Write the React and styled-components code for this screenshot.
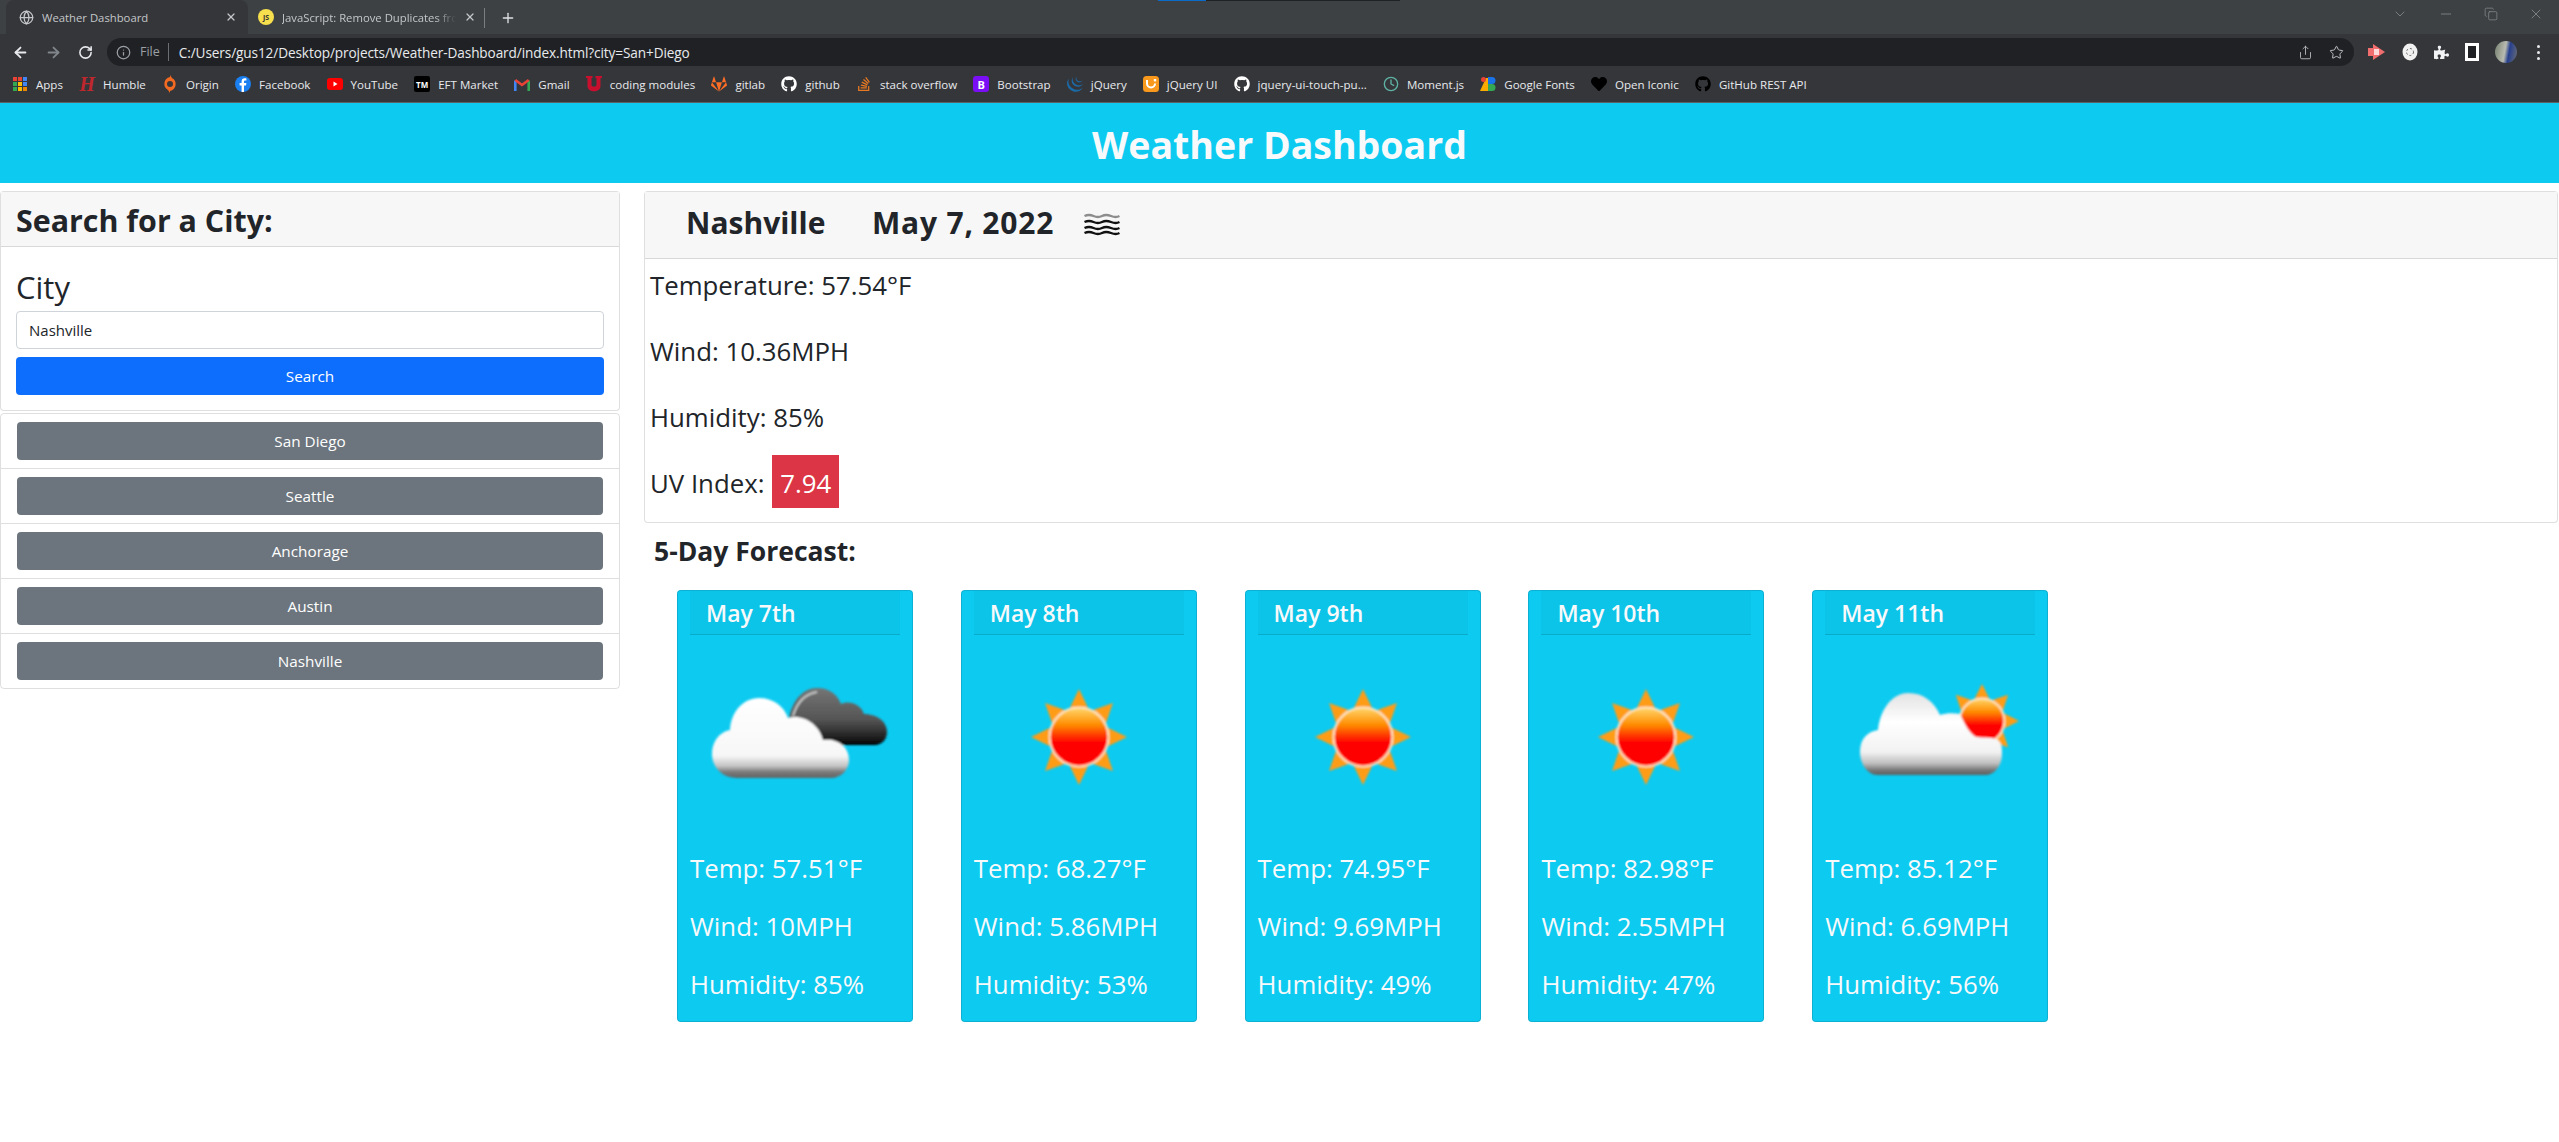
import React from 'react';
import styled, { createGlobalStyle } from 'styled-components';
import {
  ArrowLeft,
  ArrowRight,
  RotateCw,
  Info,
  Star,
  Share,
  X,
  Plus,
  Globe,
  ChevronDown,
  Minus,
  Copy,
  Clock
} from 'lucide-react';
import {
  FaGithub,
  FaGitlab,
  FaStackOverflow,
  FaHeart,
  FaPuzzlePiece
} from 'react-icons/fa';
import { SiJquery } from 'react-icons/si';

const FONT = '"Open Sans", "Noto Sans", sans-serif';

const GlobalStyle = createGlobalStyle`
  html, body {
    margin: 0;
    padding: 0;
    background: #fff;
  }
  body {
    font-family: ${FONT};
    color: #212529;
  }
  * {
    box-sizing: border-box;
  }
`;

const Page = styled.div`
  position: relative;
  width: 2559px;
  height: 1142px;
  overflow: hidden;
`;

/* browser frame */
const TabStrip = styled.div`
  display: flex;
  align-items: flex-end;
  height: 34px;
  padding-left: 6px;
  background: #3e4144;
  color: #c4c7c9;
  font-size: 11.3px;
`;

const LoadBar = styled.div`
  position: absolute;
  top: 0;
  left: 1158px;
  width: 242px;
  height: 1px;
  background: linear-gradient(90deg, #0b6bc9 20%, #202124 20%);
`;

const Tab = styled.div`
  display: flex;
  align-items: center;
  flex: none;
  width: ${(p) => p.$width}px;
  height: ${(p) => (p.$active ? 34 : 30)}px;
  padding: ${(p) => (p.$active ? '0 11px 0 13px' : '0 8px 4px 10px')};
  gap: 8px;
  background: ${(p) => (p.$active ? '#35363a' : 'transparent')};
  border-radius: 8px 8px 0 0;
  svg {
    flex: none;
  }
`;

const TabTitle = styled.span`
  flex: 1;
  overflow: hidden;
  white-space: nowrap;
  mask-image: ${(p) => (p.$fade ? 'linear-gradient(90deg, #000 88%, transparent 100%)' : 'none')};
`;

const JsFavicon = styled.span`
  display: flex;
  align-items: center;
  justify-content: center;
  flex: none;
  width: 16px;
  height: 16px;
  border-radius: 50%;
  background: #f7df4e;
  color: #333;
  font-size: 7px;
  font-weight: 700;
`;

const TabDivider = styled.span`
  flex: none;
  width: 1px;
  height: 20px;
  margin: 0 15px 6px 0;
  background: #7b7e81;
`;

const NewTab = styled.span`
  display: flex;
  margin-bottom: 8px;
  color: #dfe1e5;
`;

const WindowControls = styled.div`
  display: flex;
  align-items: center;
  gap: 30px;
  margin-left: auto;
  padding: 0 15px 12px 0;
  color: #9a9da0;
  align-self: flex-end;
`;

const Toolbar = styled.div`
  display: flex;
  align-items: center;
  height: 32px;
  padding: 4px 0 0 12px;
  background: #35363a;
  color: #e8eaed;
`;

const NavButtons = styled.div`
  display: flex;
  align-items: center;
  gap: 16px;
  width: 95px;
  flex: none;
`;

const Omnibox = styled.div`
  display: flex;
  align-items: center;
  flex: none;
  width: 2247px;
  height: 28px;
  padding: 0 10px 0 9px;
  border-radius: 14px;
  background: #202124;
  color: #9aa0a6;
  font-size: 12.5px;
`;

const Scheme = styled.span`
  margin-left: 9px;
  padding-right: 8px;
  border-right: 1px solid #6b6e72;
  line-height: 18px;
`;

const Url = styled.span`
  flex: 1;
  margin-left: 10px;
  color: #e8eaed;
  font-size: 13.6px;
  letter-spacing: -0.1px;
`;

const OmniActions = styled.div`
  display: flex;
  gap: 16px;
  color: #c8cacd;
`;

const Extensions = styled.div`
  display: flex;
  align-items: center;
  gap: 16px;
  margin-left: 14px;
`;

const Avatar = styled.span`
  width: 22px;
  height: 22px;
  border-radius: 50%;
  background: linear-gradient(100deg, #75806f 0%, #b9bbb0 45%, #27408e 62%, #6a6d74 100%);
`;

const Kebab = styled.span`
  display: flex;
  flex-direction: column;
  gap: 3px;
  margin-left: 4px;
  i {
    width: 3px;
    height: 3px;
    border-radius: 50%;
    background: #e8eaed;
  }
`;

const SidePanelIcon = styled.span`
  width: 14px;
  height: 18px;
  border: 3px solid #fff;
  background: #202124;
`;

const BookmarksBar = styled.div`
  display: flex;
  align-items: center;
  height: 37px;
  padding-left: 12px;
  gap: 16.15px;
  background: #35363a;
  border-bottom: 1px solid #5f6063;
  color: #e8eaed;
  font-size: 11.55px;
`;

const Bookmark = styled.span`
  display: flex;
  align-items: center;
  flex: none;
  gap: 8px;
  white-space: nowrap;
  svg {
    display: block;
    flex: none;
  }
`;

const BookmarkBadge = styled.span`
  display: flex;
  align-items: center;
  justify-content: center;
  flex: none;
  width: 16px;
  height: 16px;
  border-radius: ${(p) => p.$radius || 2}px;
  background: ${(p) => p.$bg};
  color: #fff;
  font-size: ${(p) => p.$size || 8}px;
  font-weight: 700;
`;

const HumbleMark = styled.span`
  display: block;
  flex: none;
  width: 16px;
  color: #c0272d;
  font-family: "Liberation Serif", serif;
  font-style: italic;
  font-weight: 700;
  font-size: 20px;
  line-height: 16px;
  text-align: center;
`;

/* page */
const Banner = styled.header`
  display: flex;
  align-items: center;
  justify-content: center;
  height: 80px;
  background: #0dcaf0;
`;

const BannerTitle = styled.h1`
  margin: 0;
  padding-top: 2px;
  color: #f8f9fa;
  font-size: 37.5px;
  font-weight: 700;
  line-height: 1.2;
`;

const Columns = styled.main`
  display: grid;
  grid-template-columns: 620px 1fr;
  column-gap: 24px;
  padding: 8px 1px 0 0;
  align-items: start;
`;

const Sidebar = styled.aside`
  display: flex;
  flex-direction: column;
  gap: 2px;
`;

const Card = styled.section`
  border: 1px solid rgba(0, 0, 0, 0.125);
  border-radius: 4px;
  background: #fff;
`;

const CardHeader = styled.div`
  display: flex;
  align-items: flex-start;
  height: ${(p) => p.$height}px;
  padding: ${(p) => p.$top}px 15px 0;
  background: #f7f7f7;
  border-bottom: 1px solid rgba(0, 0, 0, 0.125);
`;

const CardTitle = styled.h3`
  margin: 0;
  font-size: 30.4px;
  font-weight: 700;
  line-height: 37px;
  white-space: nowrap;
`;

const CityName = styled(CardTitle)`
  margin-left: 26px;
  width: 186px;
  font-size: 30px;
`;

const CityDate = styled(CardTitle)`
  width: 212px;
  font-size: 30px;
  letter-spacing: 0.8px;
`;

const WaveIcon = styled.svg`
  flex: none;
  margin-top: 8px;
`;

const SearchForm = styled.form`
  display: flex;
  flex-direction: column;
  padding: 16px 15px 15px;
`;

const FieldLabel = styled.label`
  height: 40px;
  margin-bottom: 8px;
  font-size: 31px;
  line-height: 48px;
`;

const CityInput = styled.div`
  display: flex;
  align-items: center;
  height: 38px;
  padding: 0 12px;
  border: 1px solid #ced4da;
  border-radius: 4px;
  font-size: 15px;
  margin-bottom: 8px;
`;

const Button = styled.div`
  display: flex;
  align-items: center;
  justify-content: center;
  height: 38px;
  border-radius: 4px;
  background: ${(p) => p.$bg};
  color: #fff;
  font-size: 15.3px;
`;

const HistoryList = styled.ul`
  display: flex;
  flex-direction: column;
  margin: 0;
  padding: 0;
  list-style: none;
  border: 1px solid rgba(0, 0, 0, 0.125);
  border-radius: 4px;
`;

const HistoryItem = styled.li`
  padding: 8px 16px;
  & + & {
    border-top: 1px solid rgba(0, 0, 0, 0.125);
  }
`;

const Detail = styled.div`
  padding: 8px 5px 0;
`;

const Stat = styled.p`
  margin: 0 0 30px;
  font-size: 25.8px;
  line-height: 36px;
  white-space: nowrap;
  &:last-child {
    margin: -10px 0 0;
    height: 67px;
    line-height: 57px;
  }
`;

const UvBadge = styled.span`
  display: inline-block;
  height: 53px;
  margin-left: 1px;
  padding: 0 8px;
  background: #dc3545;
  color: #fff;
  line-height: 57px;
`;

const ForecastTitle = styled.h4`
  margin: 10px 0 21px 10px;
  font-size: 26.5px;
  font-weight: 700;
  line-height: 36px;
`;

const ForecastRow = styled.div`
  display: flex;
  gap: 47.8px;
  padding-left: 33px;
`;

const DayCard = styled.article`
  display: flex;
  flex-direction: column;
  flex: none;
  width: 236px;
  height: 432px;
  border: 1px solid rgba(0, 0, 0, 0.125);
  border-radius: 4px;
  background: #0dcaf0;
  color: #f8f9fa;
`;

const DayHeader = styled.div`
  height: 44px;
  margin: 0 12px;
  padding: 0 16px;
  background: rgba(0, 0, 0, 0.03);
  border-bottom: 1px solid rgba(0, 0, 0, 0.125);
  font-size: 23px;
  font-weight: 600;
  line-height: 44px;
  white-space: nowrap;
`;

const DayIcon = styled.div`
  display: flex;
  justify-content: center;
  height: 204px;
  margin-top: 3px;
  margin-bottom: 12px;
`;

const DayStat = styled.p`
  margin: 0 0 22px 12px;
  font-size: 25.8px;
  line-height: 36px;
  white-space: nowrap;
`;

/* drawn icons */
const AppsIcon = () => {
  const colors = ['#e94335', '#e94335', '#4285f4', '#34a853', '#fbbc04', '#4285f4', '#34a853', '#fbbc04', '#ea8600'];
  return (
    <svg width="16" height="14" viewBox="-1 0 16 14">
      {colors.map((c, i) => (
        <rect key={i} x={(i % 3) * 5} y={Math.floor(i / 3) * 5} width="4" height="4" fill={c} />
      ))}
    </svg>
  );
};

const OriginIcon = () => (
  <svg width="16" height="18" viewBox="0 0 16 18">
    <path d="M8 0 L10 3 A7 7 0 0 1 8 16 L8 18 L6 15 A7 7 0 0 1 8 2 Z" fill="#f26a21" />
    <circle cx="8" cy="9" r="3" fill="#35363a" />
  </svg>
);

const FacebookIcon = () => (
  <svg width="16" height="16" viewBox="0 0 16 16">
    <circle cx="8" cy="8" r="8" fill="#1a7ff0" />
    <path d="M9 16V9.5h2l.4-2.4H9V5.8c0-.8.3-1.2 1.2-1.2h1.2V2.5C10.900 2.400 10.300 2.300 9.700 2.300 7.800 2.300 6.600 3.500 6.600 5.500v1.600H4.600v2.400h2V16z" fill="#fff" />
  </svg>
);

const YoutubeIcon = () => (
  <svg width="16" height="12" viewBox="0 0 16 12">
    <rect width="16" height="12" rx="3" fill="#f00" />
    <path d="M6.500 3.500 L10.500 6 L6.500 8.500 Z" fill="#fff" />
  </svg>
);

const GmailIcon = () => (
  <svg width="16" height="13" viewBox="0 0 16 13" fill="none" strokeWidth="2.600">
    <path d="M1.300 13V2.500" stroke="#4285f4" />
    <path d="M14.700 13V2.500" stroke="#34a853" />
    <path d="M1.300 2 L8 7 L14.700 2" stroke="#ea4335" />
  </svg>
);

const UtahIcon = () => (
  <svg width="16" height="16" viewBox="0 0 16 16">
    <path d="M0 0h6.500v2H5.500v7c0 2 5 2 5 0V2H9.500V0H16v2h-1.500v8c0 7-13 7-13 0V2H0z" fill="#c8102e" />
  </svg>
);

const JqueryUiIcon = () => (
  <svg width="16" height="16" viewBox="0 0 16 16">
    <rect width="16" height="16" rx="3.500" fill="#f8981d" />
    <path d="M4 4v3.500a4 4 0 0 0 8 0" fill="none" stroke="#fff" strokeWidth="2" />
    <rect x="10.800" y="3" width="2.400" height="2.400" fill="#fff" />
  </svg>
);

const GoogleFontsIcon = () => (
  <svg width="16" height="16" viewBox="0 0 16 16">
    <path d="M0 15 L6 2 H8 V15 Z" fill="#f9ab00" />
    <circle cx="3.500" cy="3.500" r="2.500" fill="#ea4335" />
    <rect x="8" y="1" width="4" height="7" fill="#1a73e8" />
    <circle cx="12" cy="4.500" r="3.500" fill="#1a73e8" />
    <circle cx="12" cy="11.500" r="3.500" fill="#34a853" />
    <rect x="8" y="8" width="4" height="7" fill="#34a853" />
  </svg>
);

const RecordIcon = () => (
  <svg width="18" height="18" viewBox="0 0 18 18">
    <path d="M0 5h5V1l12 8-12 8v-4H0z" fill="#f26d6d" />
    <rect x="6" y="6" width="5" height="6" fill="#ffd9d9" />
  </svg>
);

const BracketIcon = () => (
  <svg width="16" height="18" viewBox="0 0 16 18">
    <ellipse cx="8" cy="9" rx="7.500" ry="8.500" fill="#f1f1f1" />
    <circle cx="8" cy="9" r="3.500" fill="none" stroke="#666" strokeDasharray="2 2" />
  </svg>
);

const Waves = () => (
  <WaveIcon width="36" height="24" viewBox="0 0 36 24" fill="none" strokeWidth="2.400">
    {[3, 9, 15, 20].map((y, i) => (
      <path
        key={y}
        d={`M0.500 ${y + 1} Q5 ${y - 1} 9.500 ${y + 1} T18 ${y + 1} T27 ${y + 1} T35.500 ${y + 1}`}
        stroke={i === 0 ? '#8d8d8d' : '#111'}
      />
    ))}
  </WaveIcon>
);

const rayPoints = (cx, cy, outer, inner) => {
  const points = [];
  for (let i = 0; i < 16; i += 1) {
    const r = i % 2 === 0 ? outer : inner;
    const a = (i * Math.PI) / 8 - Math.PI / 2;
    points.push(`${cx + r * Math.cos(a)},${cy + r * Math.sin(a)}`);
  }
  return points.join(' ');
};

const Sun = ({ cx, cy, outer, inner, disc, id }) => (
  <g>
    <defs>
      <linearGradient id={id} x1="0" y1="0" x2="0" y2="1">
        <stop offset="0" stopColor="#ffd76a" />
        <stop offset="0.3" stopColor="#ff8a00" />
        <stop offset="0.6" stopColor="#ff0000" />
        <stop offset="1" stopColor="#ff0000" />
      </linearGradient>
    </defs>
    <polygon points={rayPoints(cx, cy, outer, inner)} fill="#ff9c12" />
    <circle cx={cx} cy={cy} r={disc + 0.7} fill={`url(#${id})`} stroke="#ffe7c4" strokeWidth="1" />
  </g>
);

const IconFrame = ({ children }) => (
  <svg width="200" height="200" viewBox="0 0 100 100">
    <defs>
      <filter id="soft" x="-10%" y="-10%" width="120%" height="120%">
        <feGaussianBlur stdDeviation="0.45" />
      </filter>
      <linearGradient id="whiteCloud" x1="0" y1="0" x2="0" y2="1">
        <stop offset="0" stopColor="#ffffff" />
        <stop offset="0.72" stopColor="#f7f7f7" />
        <stop offset="0.85" stopColor="#c4c4c4" />
        <stop offset="0.92" stopColor="#7d7d7d" />
        <stop offset="1" stopColor="#626262" />
      </linearGradient>
      <linearGradient id="palerCloud" x1="0" y1="0" x2="0" y2="1">
        <stop offset="0" stopColor="#e2e2e2" />
        <stop offset="0.35" stopColor="#ffffff" />
        <stop offset="0.72" stopColor="#f2f2f2" />
        <stop offset="0.86" stopColor="#bdbdbd" />
        <stop offset="0.94" stopColor="#787878" />
        <stop offset="1" stopColor="#5e5e5e" />
      </linearGradient>
      <linearGradient id="darkCloud" x1="0" y1="0" x2="0" y2="1">
        <stop offset="0" stopColor="#757575" />
        <stop offset="0.55" stopColor="#555" />
        <stop offset="0.85" stopColor="#222" />
        <stop offset="1" stopColor="#000" />
      </linearGradient>
    </defs>
    <g filter="url(#soft)">{children}</g>
  </svg>
);

const BrokenClouds = () => (
  <IconFrame>
    <path
      d="M47 40 C49 31 54 25 61 25 C67 25 71 28 73 33 C77 31 83 33 84.500 38 C90 38 96 41 96 47 C96 51 93 53.500 90 53.500 H58 Z"
      fill="url(#darkCloud)"
    />
    <path d="M49 39 C51 32 55 28 61 27" fill="none" stroke="#c8c8c8" strokeWidth="1" />
    <path
      d="M21 70 C13 70 8.500 64 8.500 58 C8.500 52 12 47 17.500 46 C18 37 24 30 32 30 C39 30 44.500 34 46.500 40 C54 38 62 43 64 51 C71 50 77 54 77 61 C77 66 73 70 68 70 Z"
      fill="url(#whiteCloud)"
    />
  </IconFrame>
);

const ClearSky = () => (
  <IconFrame>
    <Sun cx={50} cy={49.500} outer={24} inner={14} disc={14} id="sunClear" />
  </IconFrame>
);

const FewClouds = () => (
  <IconFrame>
    <Sun cx={76} cy={41.500} outer={18.500} inner={11} disc={10.500} id="sunFew" />
    <path
      d="M24 68.500 C18 68.500 15 62 15 57 C15 51 18 47 24 46 C25 36 31 27.500 39 27.500 C47 27.500 52 32 55 38.500 C58 37.500 62 37.500 65 38 C67 42 69 47 73 49.500 C77 50 82 49.500 84 51 C86 53 86 55 86 58 C86 64 82 68.500 78 68.500 Z"
      fill="url(#palerCloud)"
    />
  </IconFrame>
);

const BOOKMARKS = [
  ['Apps', <AppsIcon />],
  ['Humble', <HumbleMark>H</HumbleMark>],
  ['Origin', <OriginIcon />],
  ['Facebook', <FacebookIcon />],
  ['YouTube', <YoutubeIcon />],
  ['EFT Market', <BookmarkBadge $bg="#000">TM</BookmarkBadge>],
  ['Gmail', <GmailIcon />],
  ['coding modules', <UtahIcon />],
  ['gitlab', <FaGitlab size={16} color="#fc6d26" />],
  ['github', <FaGithub size={16} color="#fff" />],
  ['stack overflow', <FaStackOverflow size={16} color="#e87922" />],
  ['Bootstrap', <BookmarkBadge $bg="#7a0ef5" $size={11} $radius={3}>B</BookmarkBadge>],
  ['jQuery', <SiJquery size={16} color="#1b6aa8" />],
  ['jQuery UI', <JqueryUiIcon />],
  ['jquery-ui-touch-pu...', <FaGithub size={16} color="#fff" />],
  ['Moment.js', <Clock size={16} color="#5fb3a5" />],
  ['Google Fonts', <GoogleFontsIcon />],
  ['Open Iconic', <FaHeart size={16} color="#000" />],
  ['GitHub REST API', <FaGithub size={16} color="#000" />]
];

const CITIES = ['San Diego', 'Seattle', 'Anchorage', 'Austin', 'Nashville'];

const FORECAST = [
  { day: 'May 7th', temp: '57.51', wind: '10', humidity: 85, Icon: BrokenClouds },
  { day: 'May 8th', temp: '68.27', wind: '5.86', humidity: 53, Icon: ClearSky },
  { day: 'May 9th', temp: '74.95', wind: '9.69', humidity: 49, Icon: ClearSky },
  { day: 'May 10th', temp: '82.98', wind: '2.55', humidity: 47, Icon: ClearSky },
  { day: 'May 11th', temp: '85.12', wind: '6.69', humidity: 56, Icon: FewClouds }
];

export default function App() {
  return (
    <Page>
      <GlobalStyle />
      <LoadBar />
      <TabStrip>
        <Tab $active $width={242}>
          <Globe size={15} />
          <TabTitle>Weather Dashboard</TabTitle>
          <X size={12} strokeWidth={2.5} />
        </Tab>
        <Tab $width={236}>
          <JsFavicon>JS</JsFavicon>
          <TabTitle $fade>JavaScript: Remove Duplicates fro</TabTitle>
          <X size={12} strokeWidth={2.5} />
        </Tab>
        <TabDivider />
        <NewTab>
          <Plus size={16} />
        </NewTab>
        <WindowControls>
          <ChevronDown size={16} strokeWidth={1} />
          <Minus size={16} strokeWidth={1} />
          <Copy size={14} strokeWidth={1} />
          <X size={16} strokeWidth={1} />
        </WindowControls>
      </TabStrip>
      <Toolbar>
        <NavButtons>
          <ArrowLeft size={17} strokeWidth={2.5} />
          <ArrowRight size={17} color="#80868b" strokeWidth={2.5} />
          <RotateCw size={15} strokeWidth={2.5} />
        </NavButtons>
        <Omnibox>
          <Info size={15} />
          <Scheme>File</Scheme>
          <Url>C:/Users/gus12/Desktop/projects/Weather-Dashboard/index.html?city=San+Diego</Url>
          <OmniActions>
            <Share size={15} strokeWidth={1.300} />
            <Star size={15} strokeWidth={1.500} />
          </OmniActions>
        </Omnibox>
        <Extensions>
          <RecordIcon />
          <BracketIcon />
          <FaPuzzlePiece size={15} color="#f1f3f4" />
          <SidePanelIcon />
          <Avatar />
          <Kebab>
            <i />
            <i />
            <i />
          </Kebab>
        </Extensions>
      </Toolbar>
      <BookmarksBar>
        {BOOKMARKS.map(([label, icon]) => (
          <Bookmark key={label}>
            {icon}
            {label}
          </Bookmark>
        ))}
      </BookmarksBar>

      <Banner>
        <BannerTitle>Weather Dashboard</BannerTitle>
      </Banner>

      <Columns>
        <Sidebar>
          <Card>
            <CardHeader $height={55} $top={10}>
              <CardTitle>Search for a City:</CardTitle>
            </CardHeader>
            <SearchForm>
              <FieldLabel>City</FieldLabel>
              <CityInput>Nashville</CityInput>
              <Button $bg="#0d6efd">Search</Button>
            </SearchForm>
          </Card>
          <HistoryList>
            {CITIES.map((city) => (
              <HistoryItem key={city}>
                <Button $bg="#6c757d">{city}</Button>
              </HistoryItem>
            ))}
          </HistoryList>
        </Sidebar>

        <div>
          <Card>
            <CardHeader $height={67} $top={12}>
              <CityName>Nashville</CityName>
              <CityDate>May 7, 2022</CityDate>
              <Waves />
            </CardHeader>
            <Detail>
              <Stat>Temperature: 57.54°F</Stat>
              <Stat>Wind: 10.36MPH</Stat>
              <Stat>Humidity: 85%</Stat>
              <Stat>
                UV Index: <UvBadge>7.94</UvBadge>
              </Stat>
            </Detail>
          </Card>
          <ForecastTitle>5-Day Forecast:</ForecastTitle>
          <ForecastRow>
            {FORECAST.map(({ day, temp, wind, humidity, Icon }) => (
              <DayCard key={day}>
                <DayHeader>{day}</DayHeader>
                <DayIcon>
                  <Icon />
                </DayIcon>
                <DayStat>Temp: {temp}°F</DayStat>
                <DayStat>Wind: {wind}MPH</DayStat>
                <DayStat>Humidity: {humidity}%</DayStat>
              </DayCard>
            ))}
          </ForecastRow>
        </div>
      </Columns>
    </Page>
  );
}
